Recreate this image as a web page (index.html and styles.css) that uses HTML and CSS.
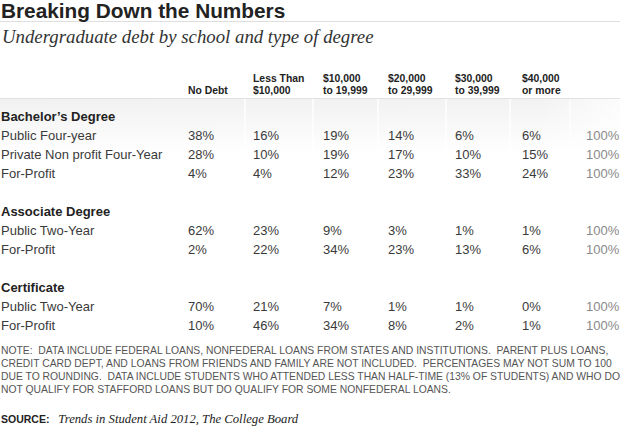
FILE: index.html
```
<!DOCTYPE html>
<html>
<head>
<meta charset="utf-8">
<link rel="stylesheet" href="styles.css">
</head>
<body>
<div class="page">
  <h1 class="title">Breaking Down the Numbers</h1>
  <p class="subtitle">Undergraduate debt by school and type of degree</p>

  <div class="grid head">
    <div></div>
    <div>No Debt</div>
    <div>Less Than<br>$10,000</div>
    <div>$10,000<br>to 19,999</div>
    <div>$20,000<br>to 29,999</div>
    <div>$30,000<br>to 39,999</div>
    <div>$40,000<br>or more</div>
    <div></div>
  </div>

  <div class="body">
    <div class="grid section"><div>Bachelor’s Degree</div></div>
    <div class="grid row"><div>Public Four-year</div><div>38%</div><div>16%</div><div>19%</div><div>14%</div><div>6%</div><div>6%</div><div class="tot">100%</div></div>
    <div class="grid row"><div>Private Non profit Four-Year</div><div>28%</div><div>10%</div><div>19%</div><div>17%</div><div>10%</div><div>15%</div><div class="tot">100%</div></div>
    <div class="grid row"><div>For-Profit</div><div>4%</div><div>4%</div><div>12%</div><div>23%</div><div>33%</div><div>24%</div><div class="tot">100%</div></div>

    <div class="grid section gap"><div>Associate Degree</div></div>
    <div class="grid row"><div>Public Two-Year</div><div>62%</div><div>23%</div><div>9%</div><div>3%</div><div>1%</div><div>1%</div><div class="tot">100%</div></div>
    <div class="grid row"><div>For-Profit</div><div>2%</div><div>22%</div><div>34%</div><div>23%</div><div>13%</div><div>6%</div><div class="tot">100%</div></div>

    <div class="grid section gap"><div>Certificate</div></div>
    <div class="grid row"><div>Public Two-Year</div><div>70%</div><div>21%</div><div>7%</div><div>1%</div><div>1%</div><div>0%</div><div class="tot">100%</div></div>
    <div class="grid row"><div>For-Profit</div><div>10%</div><div>46%</div><div>34%</div><div>8%</div><div>2%</div><div>1%</div><div class="tot">100%</div></div>
  </div>

  <p class="note">NOTE:&nbsp; DATA INCLUDE FEDERAL LOANS, NONFEDERAL LOANS FROM STATES AND INSTITUTIONS.&nbsp; PARENT PLUS LOANS,<br>CREDIT CARD DEPT, AND LOANS FROM FRIENDS AND FAMILY ARE NOT INCLUDED.&nbsp; PERCENTAGES MAY NOT SUM TO 100<br>DUE TO ROUNDING.&nbsp; DATA INCLUDE STUDENTS WHO ATTENDED LESS THAN HALF-TIME (13% OF STUDENTS) AND WHO DO<br>NOT QUALIFY FOR STAFFORD LOANS BUT DO QUALIFY FOR SOME NONFEDERAL LOANS.</p>

  <p class="source"><span class="src-label">SOURCE:</span>&nbsp; <span class="src-text">Trends in Student Aid 2012, The College Board</span></p>
</div>
</body>
</html>
```

FILE: styles.css
```
html, body {
  margin: 0;
  padding: 0;
  background: #fff;
}

.page {
  width: 620px;
  height: 433px;
  overflow: hidden;
  font-family: "Liberation Sans", Arial, sans-serif;
  color: #333;
}

.title {
  margin: 0;
  padding: 0 0 0 1px;
  font-size: 20.8px;
  line-height: 21px;
  font-weight: bold;
  color: #222;
  border-bottom: 1px solid #dedede;
}

.subtitle {
  margin: 0;
  padding: 4px 0 0 2px;
  height: 47px;
  box-sizing: border-box;
  font-family: "Liberation Serif", Georgia, serif;
  font-style: italic;
  font-size: 18.8px;
  line-height: 22px;
  color: #333;
}

.grid {
  display: grid;
  grid-template-columns: 187px 65px 70px 65px 67px 67px 64px 1fr;
  padding-left: 1px;
}

.head {
  align-items: end;
  font-size: 10.4px;
  line-height: 12px;
  font-weight: bold;
  color: #222;
  padding-top: 4px;
  padding-bottom: 1px;
  border-bottom: 1px solid #e2e2e2;
}

.body {
  padding-top: 8px;
  background:
    linear-gradient(to bottom, rgba(255,255,255,0) 0px, #ffffff 55px),
    linear-gradient(to right, transparent 244px, #fbfbfb 244px, #fbfbfb 246px, transparent 246px,
      transparent 312px, #fbfbfb 312px, #fbfbfb 314px, transparent 314px,
      transparent 377px, #fbfbfb 377px, #fbfbfb 379px, transparent 379px,
      transparent 445px, #fbfbfb 445px, #fbfbfb 447px, transparent 447px,
      transparent 509px, #fbfbfb 509px, #fbfbfb 511px, transparent 511px,
      transparent 569px, #fbfbfb 569px, #fbfbfb 571px, transparent 571px),
    linear-gradient(to right, #f1f1f1 0px, #f2f2f2 540px, #fcfcfc 620px);
}

.row, .section {
  height: 19px;
  line-height: 19px;
  font-size: 13px;
  color: #3a3a3a;
}

.section {
  font-weight: bold;
  color: #222;
}

.section > div {
  grid-column: 1 / -1;
}

.gap {
  margin-top: 19px;
}

.tot {
  color: #8a8a8a;
}

.note {
  margin: 9px 0 0 0;
  padding-left: 1px;
  font-size: 10.35px;
  line-height: 13px;
  color: #555;
  white-space: nowrap;
}

.source {
  margin: 14px 0 0 0;
  padding-left: 1px;
  line-height: 16px;
}

.src-label {
  font-size: 10.5px;
  font-weight: bold;
  color: #222;
}

.src-text {
  font-family: "Liberation Serif", Georgia, serif;
  font-style: italic;
  font-size: 12.7px;
  color: #222;
}
```
